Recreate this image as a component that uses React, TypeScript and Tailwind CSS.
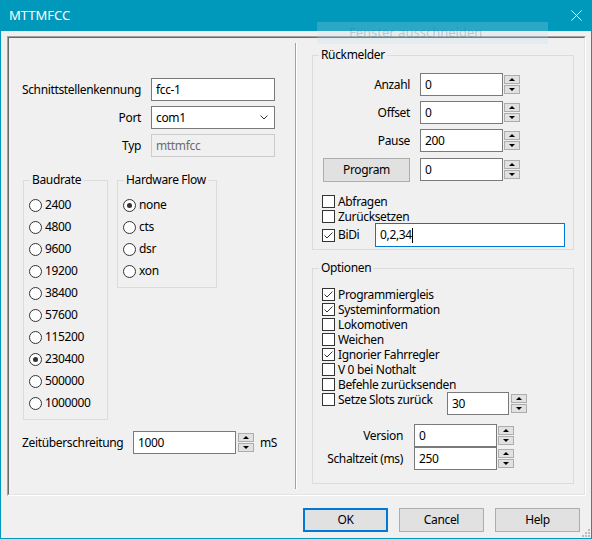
import React from "react";

type Kids = { children?: React.ReactNode };

function Spinner() {
  return (
    <div className="flex flex-col gap-[1px] w-[16px] h-[23px] pt-[2px] shrink-0">
      <div className="h-[9px] border border-[#adadad] bg-[#e1e1e1] flex items-center justify-center">
        <div className="w-0 h-0 border-x-[3px] border-x-transparent border-b-[3px] border-b-black" />
      </div>
      <div className="h-[9px] border border-[#adadad] bg-[#e1e1e1] flex items-center justify-center">
        <div className="w-0 h-0 border-x-[3px] border-x-transparent border-t-[3px] border-t-black" />
      </div>
    </div>
  );
}

function TextBox({ value, w }: { value: string; w: string }) {
  return (
    <div className={`${w} h-[23px] shrink-0 border border-[#7a7a7a] bg-white flex items-center pl-[4px]`}>
      {value}
    </div>
  );
}

function Check({ checked }: { checked?: boolean }) {
  return (
    <div className="w-[13px] h-[13px] shrink-0 border border-[#333333] bg-white flex items-center justify-center">
      {checked && (
        <svg width="11" height="11" viewBox="0 0 11 11">
          <path d="M1.5 5.5 L4 8 L9.5 2.5" fill="none" stroke="#333333" strokeWidth="1" />
        </svg>
      )}
    </div>
  );
}

function CheckRow({ label, checked }: { label: string; checked?: boolean }) {
  return (
    <div className="flex items-center h-[15px]">
      <Check checked={checked} />
      <span className="ml-[3px] whitespace-nowrap leading-[15px]">{label}</span>
    </div>
  );
}

function Radio({ label, checked }: { label: string; checked?: boolean }) {
  return (
    <div className="flex items-center h-[22px]">
      <div className="w-[13px] h-[13px] shrink-0 rounded-full border border-[#333333] bg-white flex items-center justify-center">
        {checked && <div className="w-[5px] h-[5px] rounded-full bg-[#333333]" />}
      </div>
      <span className="ml-[3px]">{label}</span>
    </div>
  );
}

function Group({ title, className, children }: Kids & { title: string; className: string }) {
  return (
    <div className={`relative border border-[#dcdcdc] shrink-0 ${className}`}>
      <span className="absolute left-[6px] -top-[9px] px-[2px] bg-[#f0f0f0] leading-[16px] whitespace-nowrap">
        {title}
      </span>
      {children}
    </div>
  );
}

function Field({ label, labelW, gap, children }: Kids & { label: string; labelW: string; gap: string }) {
  return (
    <div className="flex items-center h-[23px]">
      <span className={`${labelW} text-right whitespace-nowrap flex justify-end`}>{label}</span>
      <div className={`${gap} flex items-center`}>{children}</div>
    </div>
  );
}

const bauds = ["2400", "4800", "9600", "19200", "38400", "57600", "115200", "230400", "500000", "1000000"];
const flows = ["none", "cts", "dsr", "xon"];

export default function App() {
  return (
    <div className="relative w-[592px] h-[539px] bg-[#0099bc] flex flex-col font-['Noto_Sans','Open_Sans',sans-serif] text-[12px] tracking-[-0.35px] text-black overflow-hidden">
      {/* title bar */}
      <div className="h-[31px] shrink-0 flex items-center justify-between pl-[9px] pr-[10px] text-white text-[13px] tracking-normal">
        <span>MTTMFCC</span>
        <svg width="11" height="11" viewBox="0 0 11 11">
          <path d="M0.5 0.5 L10.5 10.5 M10.5 0.5 L0.5 10.5" stroke="white" strokeWidth="1" />
        </svg>
      </div>

      <div className="flex-1 mx-[1px] mb-[1px] bg-[#f0f0f0] flex flex-col">
        {/* sunken panel */}
        <div className="mt-[5px] ml-[6px] w-[579px] h-[460px] border border-[#a0a0a0] border-r-white border-b-white">
          <div className="h-full border border-[#696969] border-r-[#e3e3e3] border-b-[#e3e3e3] flex">
            {/* left column */}
            <div className="w-[286px] shrink-0 flex flex-col pt-[40px]">
              <Field label="Schnittstellenkennung" labelW="w-[132px]" gap="ml-[10px]">
                <TextBox w="w-[124px]" value="fcc-1" />
              </Field>
              <div className="mt-[5px]">
                <Field label="Port" labelW="w-[132px]" gap="ml-[10px]">
                  <div className="w-[124px] h-[23px] border border-[#7a7a7a] bg-white flex items-center justify-between pl-[4px] pr-[6px]">
                    <span>com1</span>
                    <svg width="8" height="5" viewBox="0 0 8 5">
                      <path d="M0.5 0.5 L4 4 L7.5 0.5" fill="none" stroke="#333333" strokeWidth="1" />
                    </svg>
                  </div>
                </Field>
              </div>
              <div className="mt-[5px]">
                <Field label="Typ" labelW="w-[132px]" gap="ml-[10px]">
                  <div className="w-[124px] h-[23px] border border-[#cccccc] bg-[#f0f0f0] text-[#6d6d6d] flex items-center pl-[4px]">
                    mttmfcc
                  </div>
                </Field>
              </div>

              <div className="flex items-start mt-[23px] ml-[14px]">
                <Group title="Baudrate" className="w-[85px] h-[240px] pt-[13px] pl-[5px]">
                  {bauds.map((b) => (
                    <Radio key={b} label={b} checked={b === "230400"} />
                  ))}
                </Group>
                <Group title="Hardware Flow" className="ml-[9px] w-[100px] h-[108px] pt-[13px] pl-[5px]">
                  {flows.map((f) => (
                    <Radio key={f} label={f} checked={f === "none"} />
                  ))}
                </Group>
              </div>

              <div className="flex items-center h-[23px] mt-[11px] pl-[13px]">
                <span className="w-[111px] whitespace-nowrap">Zeitüberschreitung</span>
                <TextBox w="w-[103px]" value="1000" />
                <div className="ml-[2px]">
                  <Spinner />
                </div>
                <span className="ml-[6px]">mS</span>
              </div>
            </div>

            {/* separator */}
            <div className="w-[2px] my-[5px] border-l border-l-[#a0a0a0] border-r border-r-white" />

            {/* right column */}
            <div className="flex-1 flex flex-col">
              <Group title="Rückmelder" className="ml-[15px] mt-[17px] w-[262px] h-[195px] pt-[17px]">
                <Field label="Anzahl" labelW="w-[97px]" gap="ml-[10px]">
                  <TextBox w="w-[83px]" value="0" />
                  <div className="ml-[1px]"><Spinner /></div>
                </Field>
                <div className="mt-[5px]">
                  <Field label="Offset" labelW="w-[97px]" gap="ml-[10px]">
                    <TextBox w="w-[83px]" value="0" />
                    <div className="ml-[1px]"><Spinner /></div>
                  </Field>
                </div>
                <div className="mt-[5px]">
                  <Field label="Pause" labelW="w-[97px]" gap="ml-[10px]">
                    <TextBox w="w-[83px]" value="200" />
                    <div className="ml-[1px]"><Spinner /></div>
                  </Field>
                </div>
                <div className="mt-[6px] pl-[10px] flex items-start">
                  <div className="w-[87px] h-[24px] border border-[#adadad] bg-[#e1e1e1] flex items-center justify-center">
                    Program
                  </div>
                  <div className="ml-[10px]">
                    <TextBox w="w-[83px]" value="0" />
                  </div>
                  <div className="ml-[1px]"><Spinner /></div>
                </div>

                <div className="mt-[12px] pl-[9px] flex flex-col">
                  <CheckRow label="Abfragen" />
                  <CheckRow label="Zurücksetzen" />
                  <div className="flex items-center h-[24px] -mt-[1px]">
                    <div className="w-[53px] flex items-center">
                      <Check checked />
                      <span className="ml-[3px]">BiDi</span>
                    </div>
                    <div className="w-[190px] h-[24px] border border-[#0078d7] bg-white flex items-center pl-[4px]">
                      0,2,34
                      <span className="w-[1px] h-[15px] bg-black" />
                    </div>
                  </div>
                </div>
              </Group>

              <Group title="Optionen" className="ml-[15px] mt-[18px] w-[262px] h-[216px] pt-[18px]">
                <div className="pl-[9px] flex flex-col">
                  <CheckRow label="Programmiergleis" checked />
                  <CheckRow label="Systeminformation" checked />
                  <CheckRow label="Lokomotiven" />
                  <CheckRow label="Weichen" />
                  <CheckRow label="Ignorier Fahrregler" checked />
                  <CheckRow label="V 0 bei Nothalt" />
                  <CheckRow label="Befehle zurücksenden" />
                  <div className="flex items-start">
                    <div className="w-[125px]">
                      <CheckRow label="Setze Slots zurück" />
                    </div>
                    <TextBox w="w-[62px]" value="30" />
                    <div className="ml-[2px]"><Spinner /></div>
                  </div>
                </div>
                <div className="mt-[9px]">
                  <Field label="Version" labelW="w-[90px]" gap="ml-[11px]">
                    <TextBox w="w-[83px]" value="0" />
                    <div className="ml-[1px]"><Spinner /></div>
                  </Field>
                  <Field label="Schaltzeit (ms)" labelW="w-[90px]" gap="ml-[11px]">
                    <TextBox w="w-[83px]" value="250" />
                    <div className="ml-[1px]"><Spinner /></div>
                  </Field>
                </div>
              </Group>
            </div>
          </div>
        </div>

        {/* buttons */}
        <div className="mt-[12px] flex justify-end gap-[11px] pr-[11px]">
          <div className="w-[85px] h-[24px] border-2 border-[#0078d7] bg-[#e1e1e1] flex items-center justify-center">
            OK
          </div>
          <div className="w-[85px] h-[24px] border border-[#adadad] bg-[#e1e1e1] flex items-center justify-center">
            Cancel
          </div>
          <div className="w-[85px] h-[24px] border border-[#adadad] bg-[#e1e1e1] flex items-center justify-center">
            Help
          </div>
        </div>
      </div>

      {/* resize grip */}
      <svg className="absolute right-[2px] bottom-[2px]" width="8" height="8" viewBox="0 0 8 8">
        <rect x="6" y="0" width="2" height="2" fill="#bcbcbc" />
        <rect x="3" y="3" width="2" height="2" fill="#bcbcbc" />
        <rect x="6" y="3" width="2" height="2" fill="#bcbcbc" />
        <rect x="0" y="6" width="2" height="2" fill="#bcbcbc" />
        <rect x="3" y="6" width="2" height="2" fill="#bcbcbc" />
        <rect x="6" y="6" width="2" height="2" fill="#bcbcbc" />
      </svg>

      {/* faded tooltip */}
      <div className="absolute left-[317px] top-[22px] w-[231px] h-[22px] bg-[rgba(190,225,235,0.22)] flex items-center pl-[32px] text-[13px] tracking-normal text-[rgba(60,110,130,0.3)]">
        Fenster ausschneiden
      </div>
    </div>
  );
}
